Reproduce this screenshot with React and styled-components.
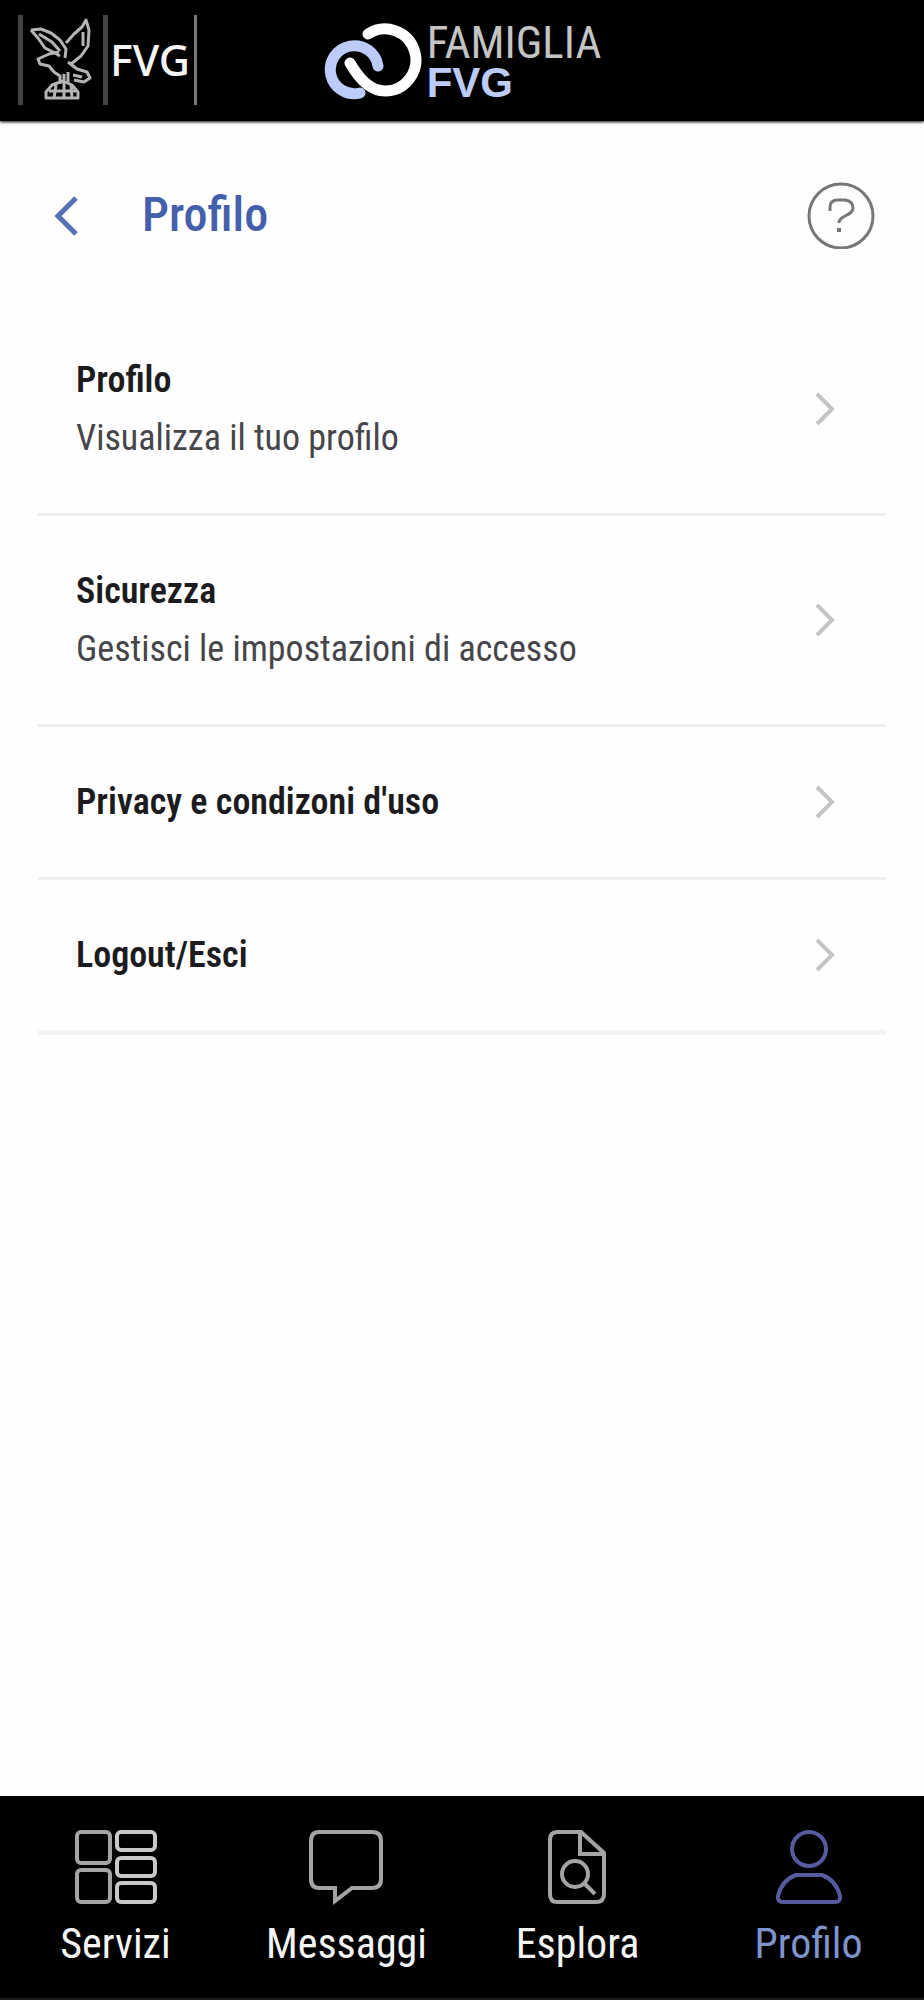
import React from 'react';
import styled, { createGlobalStyle } from 'styled-components';

const GlobalStyle = createGlobalStyle`
  * {
    box-sizing: border-box;
  }

  body {
    margin: 0;
    background: #fefefe;
    font-family: 'Roboto Condensed', Roboto, sans-serif;
  }
`;

const Page = styled.div`
  display: flex;
  flex-direction: column;
  min-height: 100vh;
`;

const TopBar = styled.header`
  display: grid;
  grid-template-columns: 1fr auto 1fr;
  align-items: start;
  height: 121px;
  padding: 15px 18px;
  background: #000;
  box-shadow: 0 1px 3px #000;
`;

const RegionLogo = styled.a`
  display: flex;
  align-items: center;
  justify-self: start;
  height: 90px;
  border-left: 5px solid #444;
  border-right: 3px solid #777;
  text-decoration: none;
`;

const EagleBox = styled.span`
  display: flex;
  align-items: center;
  height: 90px;
  padding: 0 10px 0 6px;
  border-right: 5px solid #444;
`;

const RegionName = styled.span`
  padding: 0 4px 0 2px;
  color: #f4f4f4;
  font-family: 'Noto Sans', sans-serif;
  font-size: 43px;
  font-weight: 500;
  line-height: 90px;
`;

const AppLogo = styled.a`
  display: flex;
  align-items: flex-start;
  gap: 4px;
  text-decoration: none;
`;

const AppName = styled.span`
  display: flex;
  flex-direction: column;
  padding-top: 8px;
  color: #c4c4c4;
  font-size: 45px;
  line-height: 40px;
`;

const AppRegion = styled.strong`
  color: #bccbf8;
  font-family: 'Liberation Sans', sans-serif;
  font-size: 42px;
  line-height: 40px;
`;

const TitleBar = styled.div`
  display: flex;
  align-items: center;
  height: 166px;
  padding: 22px 49px 0 48px;
  border-bottom: 1px solid #fafafa;
`;

const IconButton = styled.button`
  display: flex;
  padding: 0;
  border: 0;
  background: none;
  cursor: pointer;
`;

const Title = styled.h1`
  flex: 1;
  margin: 0 0 0 56px;
  color: #4460ac;
  font-size: 48px;
  font-weight: 500;
  line-height: 60px;
`;

const Menu = styled.ul`
  flex: 1;
  margin: 0;
  padding: 18px 38px;
  list-style: none;
`;

const MenuItem = styled.li`
  border-bottom: ${(props) => (props.$last ? 5 : 3)}px solid ${(props) => (props.$last ? '#f4f4f4' : '#eee')};
`;

const MenuLink = styled.a`
  display: flex;
  align-items: center;
  justify-content: space-between;
  padding: 46px 50px 46px 38px;
  color: #1c1c20;
  text-decoration: none;
`;

const MenuText = styled.span`
  display: flex;
  flex-direction: column;
  font-size: 36px;
  line-height: 58px;
`;

const MenuTitle = styled.span`
  font-weight: 600;
`;

const MenuNote = styled.span`
  color: #45454a;
`;

const NavBar = styled.nav`
  display: grid;
  grid-template-columns: repeat(4, 1fr);
  height: 204px;
  padding-top: 33px;
  background: #000;
  border-bottom: 2px solid #1c1c1c;
`;

const NavLink = styled.a`
  display: flex;
  flex-direction: column;
  align-items: center;
  gap: 14px;
  color: ${(props) => (props.$active ? '#7f93cc' : '#f4f4f4')};
  font-size: 42px;
  line-height: 50px;
  text-decoration: none;
`;

const Eagle = () => (
  <svg width="64" height="84" viewBox="0 0 64 84" fill="none" stroke="#b4b4b4" strokeWidth="3" strokeLinejoin="round">
    <path d="M2 12 12 11 22 15 31 22 37 31 36 40" />
    <path d="M2 12 9 20 16 30 26 35 31 38M10 16 23 24 31 33" />
    <path d="M37 25 45 16 53 9 57 2 60 12 59 28 52 38 42 46M54 14V28" />
    <path d="M30 34 20 36 9 41 11 46 20 48 25 54 31 58V66" />
    <path d="M39 44 48 51 58 54 61 60 55 64 45 62M44 57 53 59M39 54V66" />
    <path d="M35 56V80M17 80V74L23 67 34 63 43 67 49 74V80ZM20 73H47M27 67 25 80M42 67 43 80" />
  </svg>
);

const Rings = () => (
  <svg width="100" height="88" viewBox="0 0 100 88" fill="none" strokeWidth="11" strokeLinecap="round">
    <path d="M55 51A24 24 0 1 0 37 78" stroke="#bccbf8" />
    <path d="M45 19A31 31 0 1 1 62 76Q43 76 27 48" stroke="#fff" />
  </svg>
);

const BackIcon = () => (
  <svg width="38" height="44" viewBox="0 0 38 44" fill="none" stroke="#5570b5" strokeWidth="5">
    <path d="M28 5 10 23 28 41" />
  </svg>
);

const HelpIcon = () => (
  <svg width="68" height="68" viewBox="0 0 68 68" fill="none" stroke="#777" strokeWidth="3">
    <circle cx="34" cy="35" r="32" />
    <path d="M23 30V26Q23 19 31 19H38Q46 20 46 27C46 35 32 34 32 42" />
    <path d="M30 49h4" strokeWidth="4" />
  </svg>
);

const Chevron = () => (
  <svg width="22" height="36" viewBox="0 0 22 36" fill="none" stroke="#c4c4c4" strokeWidth="4">
    <path d="M3 3 18 18 3 33" />
  </svg>
);

const ServicesIcon = () => (
  <svg width="84" height="76" viewBox="0 0 84 76" fill="none" stroke="#a4a4a4" strokeWidth="4">
    <rect x="3" y="3" width="33" height="31" rx="4" />
    <rect x="3" y="41" width="33" height="32" rx="4" />
    <g stroke="#c8c8c8">
      <rect x="43" y="3" width="38" height="18" rx="4" />
      <rect x="43" y="29" width="38" height="18" rx="4" />
      <rect x="43" y="54" width="38" height="19" rx="4" />
    </g>
  </svg>
);

const MessagesIcon = () => (
  <svg width="78" height="76" viewBox="0 0 78 76" fill="none" stroke="#a4a4a4" strokeWidth="4">
    <path d="M11 3H64Q73 3 73 12V50Q73 59 64 59H44L27 72V59H11Q3 59 3 50V12Q3 3 11 3Z" />
  </svg>
);

const ExploreIcon = () => (
  <svg width="62" height="76" viewBox="0 0 62 76" fill="none" stroke="#a4a4a4" strokeWidth="4">
    <path d="M10 3H34L57 24V65Q57 73 49 73H10Q3 73 3 65V11Q3 3 10 3ZM33 3V25H57" />
    <circle cx="28" cy="45" r="13" />
    <path d="M37 54 48 65" />
  </svg>
);

const ProfileIcon = () => (
  <svg width="68" height="76" viewBox="0 0 68 76" fill="none" stroke="#565a9f" strokeWidth="4">
    <circle cx="34" cy="20" r="17" />
    <path d="M21 46H47Q61 51 65 67Q66 73 60 73H8Q2 73 3 67Q7 51 21 46Z" />
  </svg>
);

const menu = [
  { title: 'Profilo', note: 'Visualizza il tuo profilo' },
  { title: 'Sicurezza', note: 'Gestisci le impostazioni di accesso' },
  { title: "Privacy e condizoni d'uso" },
  { title: 'Logout/Esci' },
];

const tabs = [
  { label: 'Servizi', Icon: ServicesIcon },
  { label: 'Messaggi', Icon: MessagesIcon },
  { label: 'Esplora', Icon: ExploreIcon },
  { label: 'Profilo', Icon: ProfileIcon, active: true },
];

const App = () => {
  return (
    <Page>
      <GlobalStyle />
      <TopBar>
        <RegionLogo href="#regione">
          <EagleBox><Eagle /></EagleBox>
          <RegionName>FVG</RegionName>
        </RegionLogo>
        <AppLogo href="#home">
          <Rings />
          <AppName>
            FAMIGLIA
            <AppRegion>FVG</AppRegion>
          </AppName>
        </AppLogo>
      </TopBar>
      <TitleBar>
        <IconButton type="button" aria-label="Indietro"><BackIcon /></IconButton>
        <Title>Profilo</Title>
        <IconButton type="button" aria-label="Aiuto"><HelpIcon /></IconButton>
      </TitleBar>
      <Menu>
        {menu.map((item, i) => (
          <MenuItem key={item.title} $last={i === menu.length - 1}>
            <MenuLink href="#menu">
              <MenuText>
                <MenuTitle>{item.title}</MenuTitle>
                {item.note && <MenuNote>{item.note}</MenuNote>}
              </MenuText>
              <Chevron />
            </MenuLink>
          </MenuItem>
        ))}
      </Menu>
      <NavBar>
        {tabs.map(({ label, Icon, active }) => (
          <NavLink key={label} href="#tab" $active={active} aria-current={active ? 'page' : undefined}>
            <Icon />
            {label}
          </NavLink>
        ))}
      </NavBar>
    </Page>
  );
}

export default App;
